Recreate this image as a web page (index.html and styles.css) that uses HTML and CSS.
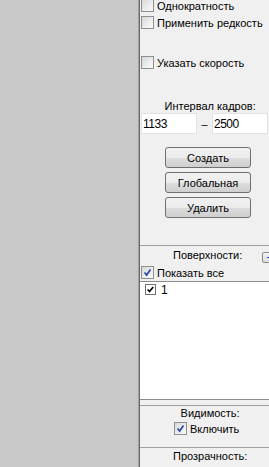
FILE: index.html
```html
<!DOCTYPE html>
<html lang="ru">
<head>
  <meta charset="utf-8">
  <title>Поверхности</title>
  <link rel="stylesheet" href="styles.css">
</head>
<body>
  <div class="view"></div>

  <aside class="panel">
    <label class="check first"><span class="box"></span>Однократность</label>
    <label class="check"><span class="box"></span>Применить редкость</label>
    <label class="check speed"><span class="box"></span>Указать скорость</label>

    <div class="caption frames">Интервал кадров:</div>
    <div class="range">
      <input class="field" type="text" value="1133">
      <span class="dash">–</span>
      <input class="field" type="text" value="2500">
    </div>

    <div class="actions">
      <button type="button" class="btn">Создать</button>
      <button type="button" class="btn">Глобальная</button>
      <button type="button" class="btn">Удалить</button>
    </div>

    <section class="group surfaces">
      <div class="group-head">
        <span class="caption">Поверхности:</span>
        <button type="button" class="mini"><span class="mini-sign"></span></button>
      </div>
      <label class="check"><span class="box on"><svg viewBox="0 0 13 13"><path d="M3 6.5 L5.5 9.5 L10 3" /></svg></span>Показать все</label>
      <div class="list">
        <div class="item"><span class="box tick"><svg viewBox="0 0 11 11"><path d="M2 5.5 L4.3 8 L8.8 2.5" /></svg></span>1</div>
      </div>
    </section>

    <section class="group visibility">
      <div class="caption">Видимость:</div>
      <label class="check center"><span class="box on"><svg viewBox="0 0 13 13"><path d="M3 6.5 L5.5 9.5 L10 3" /></svg></span>Включить</label>
    </section>

    <section class="group opacity">
      <div class="caption">Прозрачность:</div>
    </section>
  </aside>
</body>
</html>
```

FILE: styles.css
```css
html {
  height: 100%;
}

body {
  height: 100%;
  margin: 0;
  display: flex;
  overflow: hidden;
  font-family: "Liberation Sans", Arial, sans-serif;
  font-size: 11px;
  color: #000;
  background-color: #f0f0f0;
}

.view {
  flex: 0 0 139px;
  box-sizing: border-box;
  background-color: #c8c8c8;
  border-right: 1px solid #a0a0a0;
}

.panel {
  flex: 0 0 140px;
  box-sizing: border-box;
  border-left: 1px solid #696969;
  background-color: #f0f0f0;
}

.check {
  display: flex;
  align-items: center;
  gap: 3px;
  height: 17px;
  padding-left: 1px;
  white-space: nowrap;
}

.check.first {
  margin-top: -3px;
}

.check.speed {
  margin-top: 23px;
}

.check.center {
  justify-content: center;
  padding-right: 8px;
}

.box {
  flex: 0 0 auto;
  width: 13px;
  height: 13px;
  box-sizing: border-box;
  border: 1px solid #8e8f8f;
  background: linear-gradient(135deg, #d8d8d8 0%, #ececec 55%, #fbfbfb 100%);
}

.box svg {
  display: block;
  width: 100%;
  height: 100%;
}

.box.on path {
  fill: none;
  stroke: #2b4aa8;
  stroke-width: 2;
}

.box.tick {
  width: 11px;
  height: 11px;
  border-color: #6f6f6f;
  background: #fff;
}

.box.tick path {
  fill: none;
  stroke: #000;
  stroke-width: 2;
}

.caption {
  line-height: 13px;
  text-align: center;
  white-space: nowrap;
}

.frames {
  margin-top: 29px;
}

.range {
  display: flex;
  align-items: center;
  height: 21px;
  padding-left: 1px;
}

.field {
  width: 56px;
  height: 21px;
  box-sizing: border-box;
  margin: 0;
  padding: 0 1px;
  border: 1px solid #e2e2e2;
  background-color: #fff;
  font-family: inherit;
  font-size: 12px;
  letter-spacing: -0.5px;
  outline: none;
}

.dash {
  width: 15px;
  text-align: center;
}

.actions {
  display: flex;
  flex-direction: column;
  align-items: flex-start;
  gap: 4px;
  margin-top: 13px;
  padding-left: 25px;
}

.btn {
  width: 86px;
  height: 21px;
  padding: 0;
  border: 1px solid #707070;
  border-radius: 3px;
  background: linear-gradient(#f2f2f2 0%, #ebebeb 50%, #dddddd 51%, #cfcfcf 100%);
  font-family: inherit;
  font-size: 11px;
  color: #000;
}

.group {
  border-top: 1px solid #a0a0a0;
}

.surfaces {
  margin-top: 27px;
}

.group-head {
  display: flex;
  align-items: center;
  height: 18px;
  padding-left: 33px;
  gap: 20px;
}

.mini {
  width: 18px;
  height: 11px;
  padding: 0;
  margin-top: 4px;
  border: 1px solid #8a8a8a;
  border-radius: 2px;
  background: linear-gradient(#f4f4f4, #dcdcdc);
  display: flex;
  align-items: center;
  justify-content: center;
}

.mini-sign {
  width: 8px;
  height: 1px;
  background-color: #1a3fd0;
}

.list {
  height: 119px;
  box-sizing: border-box;
  border-top: 1px solid #8c8c8c;
  border-bottom: 1px solid #8c8c8c;
  background-color: #fff;
}

.item {
  display: flex;
  align-items: center;
  gap: 5px;
  margin-top: 2px;
  padding-left: 5px;
  height: 11px;
  font-size: 12px;
}

.visibility {
  margin-top: 5px;
}

.visibility .caption {
  line-height: 14px;
}

.opacity {
  margin-top: 10px;
  padding-top: 2px;
}
```
